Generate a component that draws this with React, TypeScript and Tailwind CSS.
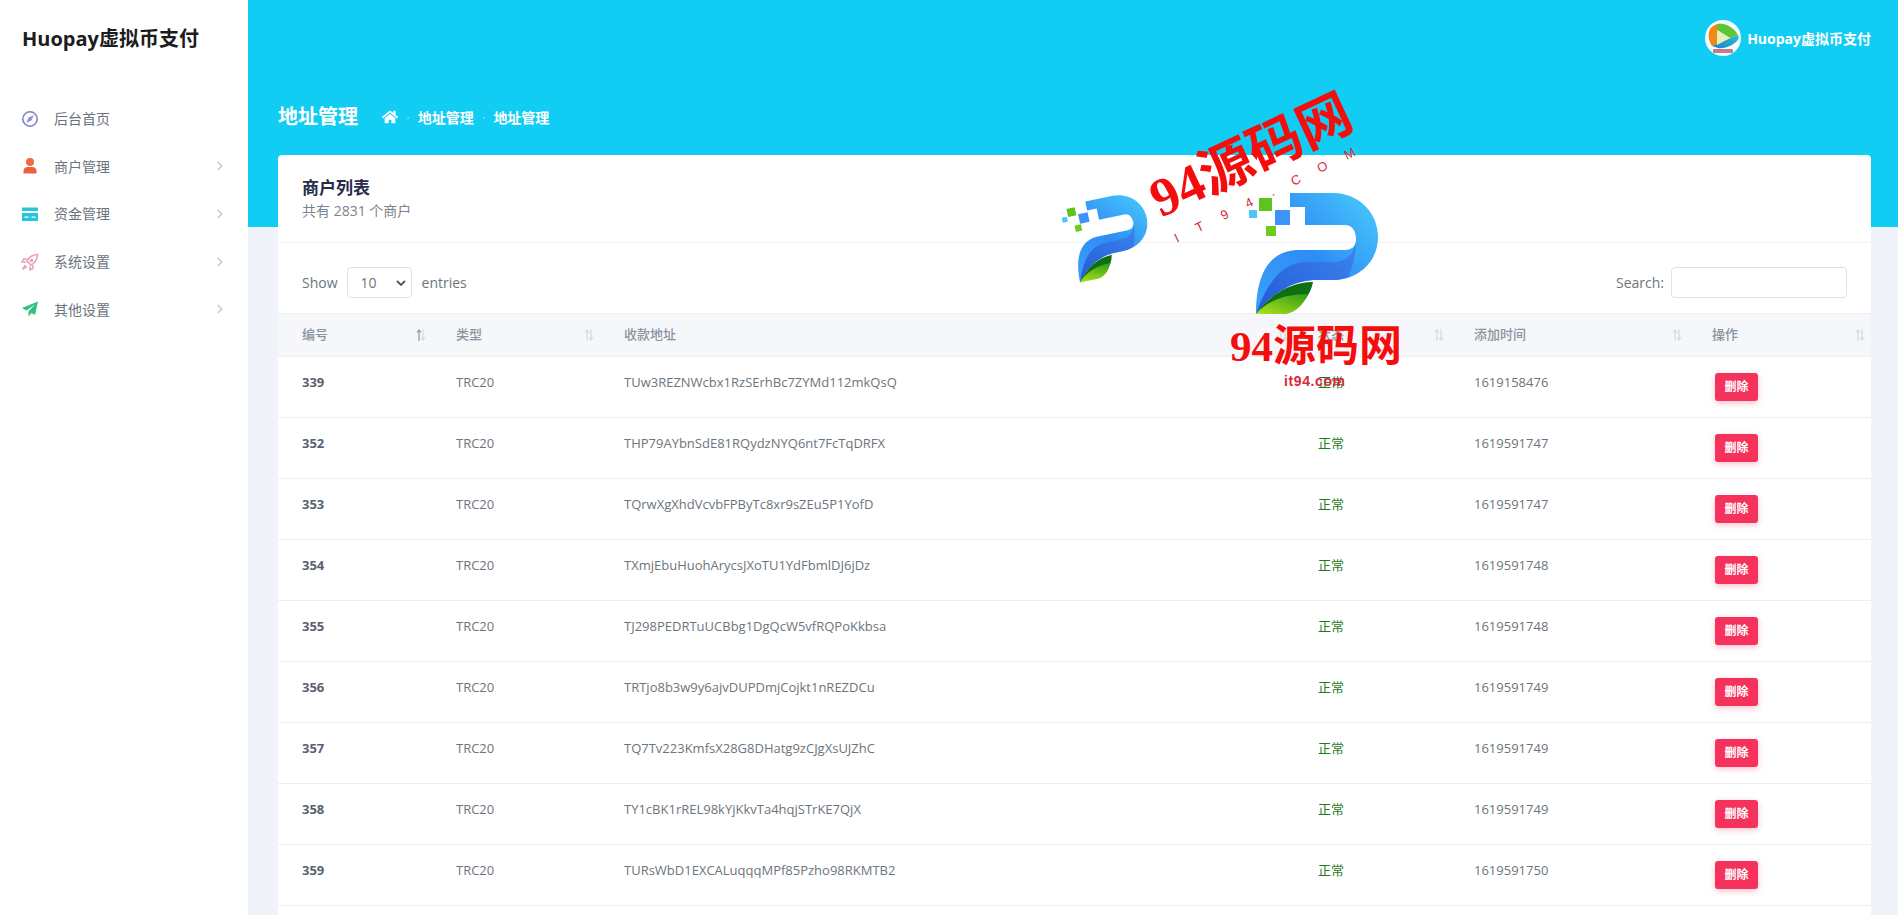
import { ChevronRight } from "lucide-react";
import { FaHome } from "react-icons/fa";

const rows = [
  ["339", "TUw3REZNWcbx1RzSErhBc7ZYMd112mkQsQ", "1619158476"],
  ["352", "THP79AYbnSdE81RQydzNYQ6nt7FcTqDRFX", "1619591747"],
  ["353", "TQrwXgXhdVcvbFPByTc8xr9sZEu5P1YofD", "1619591747"],
  ["354", "TXmjEbuHuohArycsJXoTU1YdFbmlDJ6jDz", "1619591748"],
  ["355", "TJ298PEDRTuUCBbg1DgQcW5vfRQPoKkbsa", "1619591748"],
  ["356", "TRTjo8b3w9y6ajvDUPDmjCojkt1nREZDCu", "1619591749"],
  ["357", "TQ7Tv223KmfsX28G8DHatg9zCJgXsUJZhC", "1619591749"],
  ["358", "TY1cBK1rREL98kYjKkvTa4hqjSTrKE7QjX", "1619591749"],
  ["359", "TURsWbD1EXCALuqqqMPf85Pzho98RKMTB2", "1619591750"],
];

const columns = [
  { label: "编号", width: "w-[154px]", active: true },
  { label: "类型", width: "w-[168px]" },
  { label: "收款地址", width: "w-[694px]" },
  { label: "状态", width: "w-[156px]" },
  { label: "添加时间", width: "w-[238px]" },
  { label: "操作", width: "w-[183px]" },
];

function CompassIcon() {
  return (
    <svg width="18" height="18" viewBox="0 0 18 18" fill="none">
      <circle cx="9" cy="9" r="7.2" stroke="#7c7fc4" strokeWidth="1.5" />
      <path d="M12.8 5.2 10.4 10.4 5.2 12.8 7.6 7.6Z" fill="#8f92d6" />
    </svg>
  );
}

function UserIcon() {
  return (
    <svg width="18" height="18" viewBox="0 0 18 18">
      <circle cx="9" cy="5" r="4" fill="#ef6a45" />
      <path d="M2.5 16.5v-2.5c0-2.5 2-4 4-4h5c2 0 4 1.500 4 4v2.500Z" fill="#e9623f" />
    </svg>
  );
}

function CardIcon() {
  return (
    <svg width="18" height="18" viewBox="0 0 18 18">
      <path d="M1 2.500h16v3.500H1Z" fill="#26c6da" />
      <path d="M1 8h16v8H1Z" fill="#26c6da" />
      <path d="M3.500 11.500h4v1.200h-4ZM10.500 11.500h4v1.200h-4Z" fill="#fff" />
    </svg>
  );
}

function RocketIcon() {
  return (
    <svg width="18" height="18" viewBox="0 0 18 18" fill="none">
      <path d="M16.500 1.500c-5 .3-8.500 2.500-10.500 6.500l4 4c4-2 6.200-5.500 6.500-10.500Z" stroke="#e8a0b8" strokeWidth="1.600" />
      <circle cx="10.500" cy="7.500" r="1.800" fill="#e8a0b8" />
      <path d="M6 6H2.500L1 9h4M12 12v3.500L9 17v-4M4.500 12 1.500 16.500 6 13.500" stroke="#e8a0b8" strokeWidth="1.400" />
    </svg>
  );
}

function SendIcon() {
  return (
    <svg width="18" height="18" viewBox="0 0 18 18">
      <path d="M17 1.500 1 8l4.500 2.500L14 4.500 7.500 11.500v5l3-3.500 3.500 2Z" fill="#2fbf7f" />
    </svg>
  );
}

const menu = [
  { label: "后台首页", icon: <CompassIcon /> },
  { label: "商户管理", icon: <UserIcon />, more: true },
  { label: "资金管理", icon: <CardIcon />, more: true },
  { label: "系统设置", icon: <RocketIcon />, more: true },
  { label: "其他设置", icon: <SendIcon />, more: true },
];

function SortIcon({ active }: { active?: boolean }) {
  return (
    <svg width="10" height="14" viewBox="0 0 10 14" fill="none" strokeWidth="1.200">
      <path d="M3 13V2M1 4.500 3 2l2 2.500" stroke={active ? "#8d97a5" : "#d5dae1"} />
      <path d="M7 1v11M5 9.500 7 12l2-2.500" stroke="#d5dae1" />
    </svg>
  );
}

function Avatar() {
  return (
    <svg width="36" height="36" viewBox="0 0 36 36">
      <defs>
        <linearGradient id="avatarBlue" x1="0" y1="1" x2="1" y2="0">
          <stop offset="0" stopColor="#1f7fd6" />
          <stop offset="1" stopColor="#27c3c9" />
        </linearGradient>
      </defs>
      <circle cx="18" cy="18" r="18" fill="#f4fbfd" />
      <path d="M5 9c3-4 8-6 12-5l-4 6-1 14-5 2C3 20 3 14 5 9Z" fill="#ef8a14" />
      <path d="M13 4c8-1 15 3 20 11l-8 3-13-8Z" fill="#5cc733" />
      <path d="M33 15c1 2 1 4-1 6-5 5-13 8-19 7l-6-2 5-2 13-6Z" fill="url(#avatarBlue)" />
      <path d="M12 10 25 18 12 25Z" fill="#e6efbd" />
      <rect x="8" y="29" width="20" height="4" rx="1" fill="#c9778a" />
    </svg>
  );
}

function PLogo({ id, className }: { id: string; className: string }) {
  return (
    <svg className={className} viewBox="0 0 130 124">
      <defs>
        <linearGradient id={`${id}a`} x1="0" y1="1" x2="1" y2="0.100">
          <stop offset="0" stopColor="#3aa0f8" />
          <stop offset="0.500" stopColor="#2f8cf5" />
          <stop offset="1" stopColor="#46c8fb" />
        </linearGradient>
        <linearGradient id={`${id}b`} x1="0" y1="1" x2="1" y2="0">
          <stop offset="0" stopColor="#2557d8" />
          <stop offset="1" stopColor="#3a86ee" />
        </linearGradient>
        <linearGradient id={`${id}c`} x1="0" y1="1" x2="1" y2="0">
          <stop offset="0" stopColor="#b2e21a" />
          <stop offset="1" stopColor="#2d9c17" />
        </linearGradient>
      </defs>
      <rect x="11" y="6" width="13" height="13" fill="#5cc41c" />
      <rect x="27" y="18" width="15" height="15" fill="#3d93f7" />
      <rect x="1" y="18" width="8" height="8" fill="#4cc7fb" />
      <rect x="18" y="34" width="10" height="10" fill="#6ccb1e" />
      <path
        d="M42 1H85C110 1 130 20 130 45C130 70 110 88 85 88H65C40 90 20 105 8 122C8 100 12 60 48 58H97C104 58 108 54 108 47C108 39 104 33 97 33H57V15H42Z"
        fill={`url(#${id}a)`}
      />
      <path
        d="M108 50C106 62 98 70 85 70H55C35 72 20 88 8 122C20 105 40 90 65 88H85C90 88 95 87 100 85C105 75 108 62 108 50Z"
        fill={`url(#${id}b)`}
      />
      <path d="M8 122C20 105 40 90 65 90C63 100 58 108 50 114C36 108 20 112 8 122Z" fill="#0f6f12" />
      <path d="M8 122C20 108 38 102 60 102C56 112 48 120 38 122Z" fill={`url(#${id}c)`} />
    </svg>
  );
}

export default function App() {
  return (
    <div className="relative flex h-[915px] overflow-hidden bg-[#f1f3fa] font-['Open_Sans','Noto_Sans_CJK_SC',sans-serif] text-[14px] text-[#6c757d]">
      <aside className="w-[248px] shrink-0 bg-white">
        <div className="pl-[22px] pt-[26px] text-[20px] leading-[26px] font-bold text-[#1c1c1c]">Huopay虚拟币支付</div>
        <nav className="mt-[43px] flex flex-col">
          {menu.map((item) => (
            <div key={item.label} className="flex h-[47.6px] items-center pl-[21px] pr-[21px]">
              <span className="w-[33px]">{item.icon}</span>
              <span className="flex-1 text-[#6c7280]">{item.label}</span>
              {item.more && <ChevronRight size={14} strokeWidth={3} className="text-[#c9ced6]" />}
            </div>
          ))}
        </nav>
      </aside>

      <main className="flex min-w-0 flex-1 flex-col">
        <div className="h-[227px] shrink-0 bg-[#12cdf3] px-[30px]">
          <div className="flex h-[76px] items-center justify-end">
            <Avatar />
            <span className="mr-[-3px] ml-[6px] font-bold text-white">Huopay虚拟币支付</span>
          </div>
          <div className="mt-[27px] flex items-center text-white">
            <h1 className="text-[20px] leading-[28px] font-bold">地址管理</h1>
            <FaHome size={16} className="ml-6" />
            <span className="mx-2 text-[#7fdff7]">·</span>
            <span className="font-semibold">地址管理</span>
            <span className="mx-2 text-[#7fdff7]">·</span>
            <span className="font-semibold">地址管理</span>
          </div>
        </div>

        <section className="relative mt-[-72px] mr-[27px] ml-[30px] flex-1 rounded-t-[4px] bg-white">
          <div className="h-[88px] border-b border-[#f1f3f6] px-6 pt-[22px]">
            <h2 className="text-[17px] leading-[22px] font-bold text-[#262c4a]">商户列表</h2>
            <p className="text-[14px] leading-[24px] text-[#7b838d]">共有 2831 个商户</p>
          </div>

          <div className="flex h-[70px] items-start justify-between px-6 pt-6">
            <div className="flex items-center">
              <span>Show</span>
              <div className="mr-[10px] ml-[9px] flex h-[31px] w-[65px] items-center justify-between rounded-[4px] border border-[#dee2e6] pr-[5px] pl-[13px]">
                <span>10</span>
                <svg width="10" height="6" viewBox="0 0 10 6" fill="none">
                  <path d="M1 1l4 4 4-4" stroke="#555" strokeWidth="1.800" />
                </svg>
              </div>
              <span>entries</span>
            </div>
            <div className="flex items-center">
              <span>Search:</span>
              <input className="ml-[7px] h-[31px] w-[176px] rounded-[4px] border border-[#dee2e6] bg-white" />
            </div>
          </div>

          <table className="w-[1593px] table-fixed border-collapse">
            <thead>
              <tr className="h-[43px] border-y border-[#eef0f3] bg-[#f5f7fa]">
                {columns.map((col) => (
                  <th key={col.label} className={`${col.width} pl-6 text-left text-[13px] font-medium text-[#8a939f]`}>
                    <div className="flex items-center justify-between pr-[6px]">
                      <span>{col.label}</span>
                      <SortIcon active={col.active} />
                    </div>
                  </th>
                ))}
              </tr>
            </thead>
            <tbody>
              {rows.map((row) => (
                <tr key={row[0]} className="h-[61px] border-b border-[#eceef1] align-top text-[13px] leading-[21px]">
                  <td className="pt-[15px] pl-6 font-bold text-[#5a6270]">{row[0]}</td>
                  <td className="pt-[15px] pl-6">TRC20</td>
                  <td className="pt-[15px] pl-6">{row[1]}</td>
                  <td className="pt-[15px] pl-6 text-[#1f7a1f]">正常</td>
                  <td className="pt-[15px] pl-6">{row[2]}</td>
                  <td className="pt-4 pl-[27px]">
                    <button className="block h-7 w-[43px] rounded-[3px] bg-[#f5325c] text-[12px] leading-7 font-bold text-white shadow-[0_2px_6px_rgba(245,50,92,0.3)]">
                      删除
                    </button>
                  </td>
                </tr>
              ))}
            </tbody>
          </table>
        </section>
      </main>

      {/* watermark sits over the page */}
      <PLogo id="small" className="absolute top-[197px] left-[1066px] h-[80px] w-[84px] rotate-[-12deg]" />
      <PLogo id="big" className="absolute top-[192px] left-[1248px] h-[124px] w-[130px]" />
      <div className="absolute top-[124px] left-[1143px] rotate-[-25deg] font-['Liberation_Serif','Noto_Sans_CJK_SC',serif] text-[54px] leading-[64px] font-bold whitespace-nowrap text-[#f50d0d]">
        94源码网
      </div>
      <div className="absolute top-[183px] left-[1164px] rotate-[-26deg] font-['Liberation_Sans',sans-serif] text-[13px] leading-4 tracking-[20px] whitespace-nowrap text-[#d9293c]">
        IT94.COM
      </div>
      <div className="absolute top-[322px] left-[1230px] font-['Liberation_Serif','Noto_Sans_CJK_SC',serif] text-[43px] leading-[50px] font-bold whitespace-nowrap text-[#f50d0d]">
        94源码网
      </div>
      <div className="absolute top-[372px] left-[1284px] font-['Liberation_Sans',sans-serif] text-[14px] leading-[18px] font-bold tracking-[0.6px] whitespace-nowrap text-[#d9293c]">
        it94.com
      </div>
    </div>
  );
}
